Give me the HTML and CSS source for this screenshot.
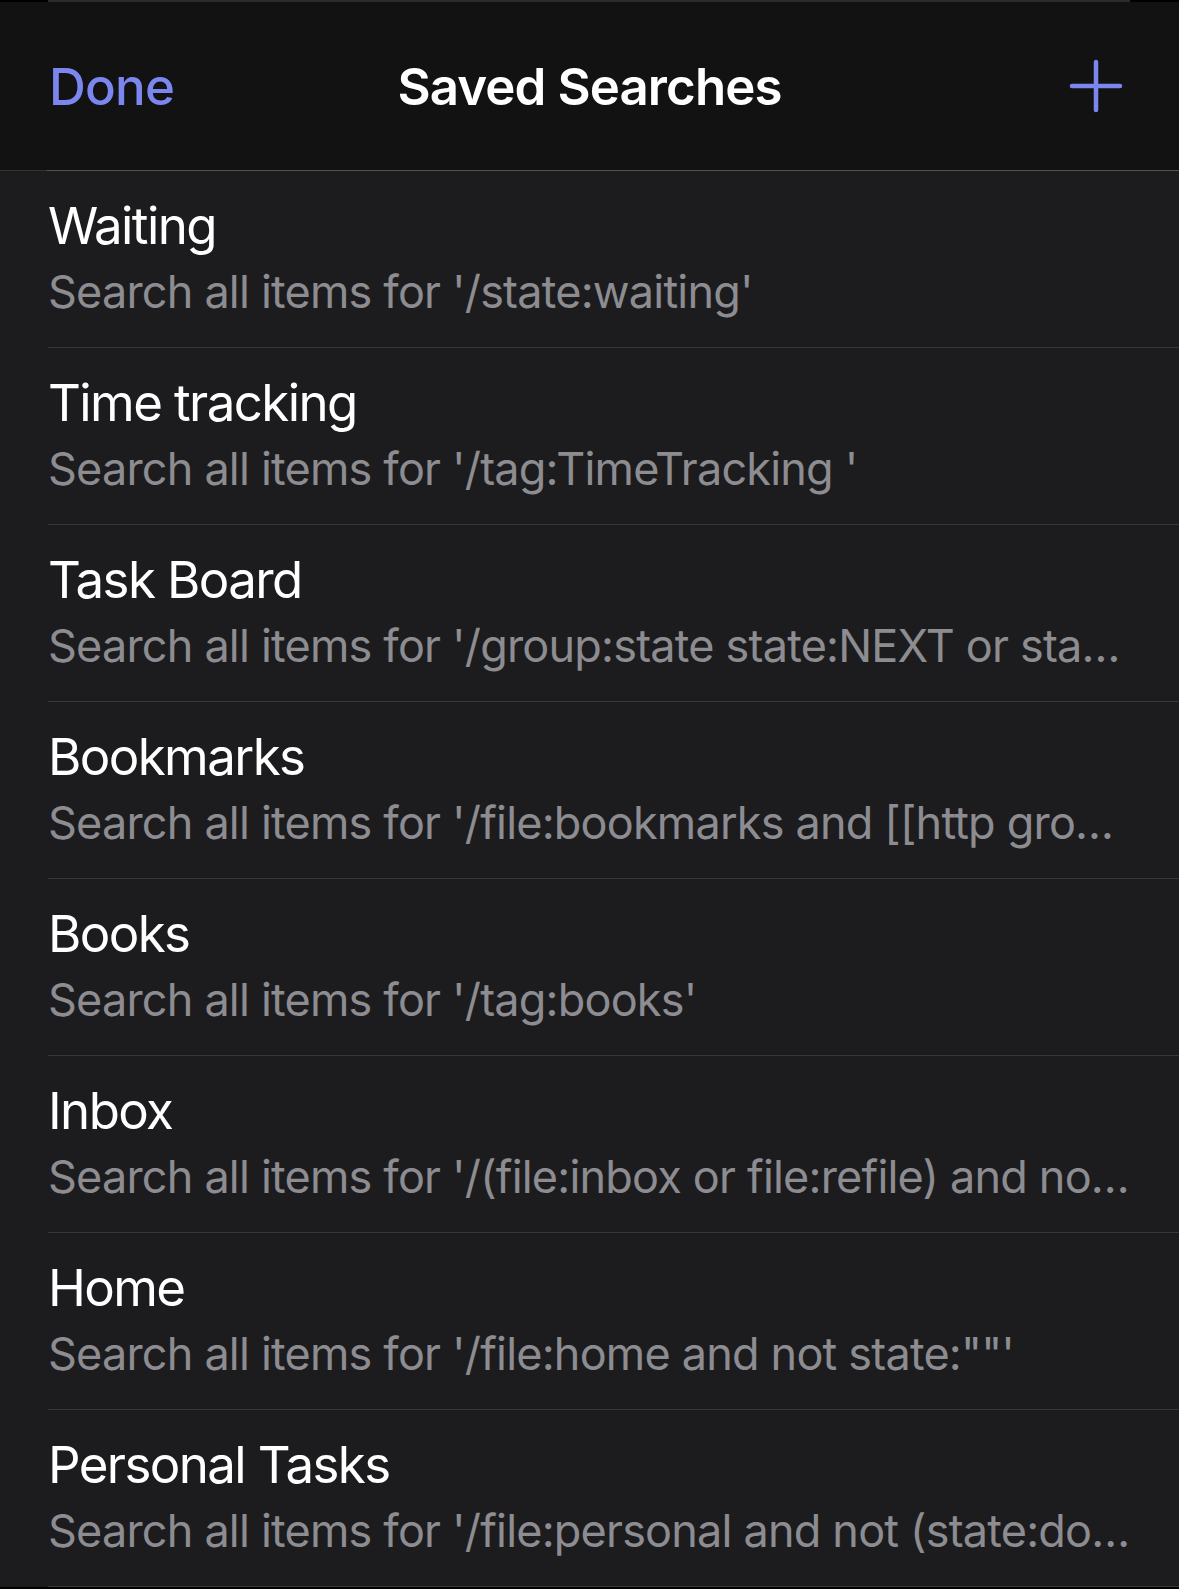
FILE: index.html
```html
<!DOCTYPE html>
<html lang="en">
<head>
  <meta charset="UTF-8" />
  <meta name="viewport" content="width=device-width, initial-scale=1.0">
  <title>Saved Searches</title>
  <link rel="stylesheet" href="styles.css">
</head>
<body>
  <div class="sheet-edge"></div>
  <header class="navbar">
    <button class="nav-btn done">Done</button>
    <h1 class="nav-title">Saved Searches</h1>
    <button class="nav-btn add" aria-label="Add">
      <svg viewBox="0 0 56 56" width="56" height="56">
        <path d="M28 4 V52 M4 28 H52" stroke="currentColor" stroke-width="4.5" stroke-linecap="round" fill="none"/>
      </svg>
    </button>
  </header>
  <ul class="search-list">
    <li class="search-row">
      <div class="row-inner">
        <div class="row-title">Waiting</div>
        <div class="row-sub">Search all items for '/state:waiting'</div>
      </div>
    </li>
    <li class="search-row">
      <div class="row-inner">
        <div class="row-title">Time tracking</div>
        <div class="row-sub">Search all items for '/tag:TimeTracking '</div>
      </div>
    </li>
    <li class="search-row">
      <div class="row-inner">
        <div class="row-title">Task Board</div>
        <div class="row-sub">Search all items for '/group:state state:NEXT or sta…</div>
      </div>
    </li>
    <li class="search-row">
      <div class="row-inner">
        <div class="row-title">Bookmarks</div>
        <div class="row-sub">Search all items for '/file:bookmarks and [[http gro…</div>
      </div>
    </li>
    <li class="search-row">
      <div class="row-inner">
        <div class="row-title">Books</div>
        <div class="row-sub">Search all items for '/tag:books'</div>
      </div>
    </li>
    <li class="search-row">
      <div class="row-inner">
        <div class="row-title">Inbox</div>
        <div class="row-sub">Search all items for '/(file:inbox or file:refile) and no…</div>
      </div>
    </li>
    <li class="search-row">
      <div class="row-inner">
        <div class="row-title">Home</div>
        <div class="row-sub">Search all items for '/file:home and not state:""'</div>
      </div>
    </li>
    <li class="search-row">
      <div class="row-inner">
        <div class="row-title">Personal Tasks</div>
        <div class="row-sub">Search all items for '/file:personal and not (state:do…</div>
      </div>
    </li>
  </ul>
</body>
</html>
```

FILE: styles.css
```css
:root {
  --accent: #7b86ef;
  --bar: #121212;
  --list: #1c1c1e;
  --sep: #38383a;
  --text: #ffffff;
  --muted: #8c8c91;
}
* {
  box-sizing: border-box;
}
html, body {
  margin: 0;
  padding: 0;
  background: #000;
}
body {
  font-family: Inter, "Noto Sans", sans-serif;
  color: var(--text);
  width: 1179px;
}
.sheet-edge {
  height: 2px;
  margin: 0 49px 0 48px;
  background: #2b2b2b;
}
.navbar {
  height: 168px;
  background: var(--bar);
  display: flex;
  align-items: center;
  justify-content: space-between;
  padding: 0 55px 0 49px;
  position: relative;
}
.nav-btn {
  background: none;
  border: none;
  padding: 0;
  color: var(--accent);
  font-family: inherit;
  cursor: pointer;
}
.done {
  font-size: 51px;
  font-weight: 500;
  letter-spacing: -0.8px;
}
.add {
  display: flex;
}
.nav-title {
  position: absolute;
  left: 0;
  right: 0;
  margin: 0;
  text-align: center;
  font-size: 51px;
  font-weight: 600;
  letter-spacing: -0.9px;
  pointer-events: none;
}
.search-list {
  list-style: none;
  margin: 0;
  padding: 0;
  background: var(--list);
  border-top: 1px solid #545456;
  border-image: linear-gradient(to right, #333335 48px, #545456 48px) 1;
}
.row-inner {
  margin-left: 48px;
  padding: 24px 30px 28px 0;
  border-bottom: 1px solid var(--sep);
}
.row-title {
  font-size: 51px;
  line-height: 61px;
  letter-spacing: -1.6px;
  white-space: nowrap;
}
.row-sub {
  margin-top: 9px;
  font-size: 45px;
  line-height: 54px;
  color: var(--muted);
  letter-spacing: -0.8px;
  white-space: nowrap;
  overflow: hidden;
  text-overflow: ellipsis;
}
```
